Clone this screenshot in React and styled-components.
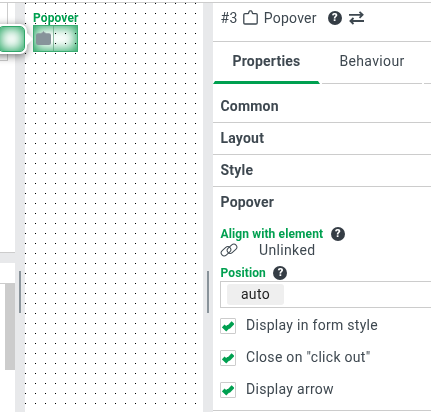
import React from "react";
import styled, { createGlobalStyle, css } from "styled-components";

const dots = css`
  background:
    linear-gradient(to bottom, transparent 1px, #fff 1px) ${(p) => p.$x || 0}px ${(p) => p.$y || 0}px / 10px 10px,
    linear-gradient(to right, #000 1px, #fff 1px) ${(p) => p.$x || 0}px ${(p) => p.$y || 0}px / 10px 10px;
`;

const Global = createGlobalStyle`
  * { box-sizing: border-box; }
  body { margin: 0; background: #fff; overflow: hidden; }
`;
const Screen = styled.div`
  width: 431px; height: 412px; padding-top: 2px; overflow: hidden; background: #fff;
  font-family: Roboto, sans-serif; font-size: 14px; letter-spacing: 0.35px; color: #3e4850;
`;
const Workspace = styled.div`
  display: grid; grid-template-columns: 15px 10px 178px 10px 218px;
  height: 410px; border-top: 1px solid #ccc;
`;
const TreePane = styled.div`
  display: flex; flex-direction: column; min-width: 0;
`;
const TreeTop = styled.div`
  height: 250px; border-bottom: 1px solid #ccc;
`;
const TreeCard = styled.div`
  width: 8px; height: 58px; border: solid #ccc; border-width: 0 1px 1px 0;
`;
const HSplit = styled.div`height: 10px; background: #e8e9eb;`;
const TreeHeader = styled.div`height: 20px;`;
const TreeList = styled.div`
  flex: 1; display: flex; justify-content: flex-end; border-top: 1px solid #ccc;
`;
const Thumb = styled.div`width: 10px; height: 87px; margin-top: -1px; background: #ccc;`;
const Gutter = styled.div`
  background: #e8e9eb; padding: 268px 0 0 4px;
`;
const Grip = styled.div`width: 2px; height: 42px; background: #89939a;`;
const Canvas = styled.div`
  position: relative;
  ${dots}
`;
const Bubble = styled.div`
  position: absolute; left: -35px; top: 21px; width: 37px; height: 30px;
  border: 2px solid #fff; border-radius: 7px; background: #fff;
  box-shadow: 0 2px 8px rgba(0, 0, 0, 0.55);
`;
const BubbleGlow = styled.div`
  height: 26px; margin-left: 6px; border-radius: 5px; border: 1px solid #2fa669;
  box-shadow: inset 0 0 12px 1px #18a058;
`;
const BubbleArrow = styled.svg`position: absolute; left: 33px; top: 5px;`;
const CanvasLabel = styled.div`
  position: absolute; left: 8px; top: 7px; font-size: 12px; line-height: 16px;
  font-weight: 700; letter-spacing: 0.12px; color: #00a050;
`;
const CanvasItem = styled.div`
  position: absolute; left: 8px; top: 22px; width: 45px; height: 27px;
  display: flex; border: 1px solid #3fae75; background: #fff;
  box-shadow: inset 0 0 12px 1px #18a058;
`;
const ItemIcon = styled.div`
  width: 20px; padding: 5px 0 0 2px;
  border-right: 1px solid rgba(80, 150, 110, 0.6);
  svg { display: block; }
`;
const ItemBody = styled.div`
  flex: 1; mix-blend-mode: multiply;
  ${dots}
`;
const Panel = styled.div`overflow: hidden;`;
const TitleBar = styled.div`
  height: 39px; padding: 0 0 9px 7.5px; display: flex; align-items: center;
  border-bottom: 1px solid #ccc;
`;
const TitleIcon = styled.svg`flex: none; margin: 0 6px 0 5px;`;
const TitleText = styled.span`width: 64px; letter-spacing: 0.25px;`;
const SwapIcon = styled.svg`flex: none; margin-left: 7px;`;
const Tabs = styled.div`display: flex; gap: 2px; height: 42px;`;
const Tab = styled.div`
  flex: none; width: ${(p) => p.$width}px; padding-top: 7px; line-height: 24px; text-align: center; height: 42px;
  font-weight: ${(p) => (p.$active ? 700 : 400)};
  letter-spacing: ${(p) => (p.$active ? 0.2 : 0.35)}px;
  background: linear-gradient(${(p) => (p.$active ? "#00a050, #00a050" : "#ccc, #ccc")}) bottom / 100% ${(p) => (p.$active ? 3 : 1)}px no-repeat;
  clip-path: ${(p) => (p.$active ? "polygon(0 0, 100% 0, calc(100% - 2px) calc(100% - 3px), 100% 100%, 0 100%, 2px calc(100% - 3px))" : "none")};
`;
const Section = styled.div`
  height: 32px; padding-left: 7.5px; line-height: 31px; font-weight: 700; letter-spacing: 0.2px;
  border-bottom: 1px solid ${(p) => (p.$open ? "transparent" : "#ccc")};
`;
const Sections = styled.div`padding-top: 7px;`;
const Fields = styled.div`padding: 7px 0 0 7px; height: 192px; border-bottom: 1px solid #ccc;`;
const FieldLabel = styled.div`
  display: flex; align-items: center; gap: 7.5px; height: 16px; padding-left: 0.5px;
  font-size: 12px; font-weight: 700; letter-spacing: 0.12px; color: #00a050;
`;
const LinkRow = styled.div`
  display: flex; align-items: center; gap: 21px; height: 16px; margin-bottom: 7px;
`;
const SelectBox = styled.div`
  width: 230px; height: 27px; margin: 0 0 2px; border: 1px solid #ccc; padding: 2px 6px;
`;
const Chip = styled.div`
  width: 57px; height: 21px; border-radius: 3px; background: #efefef; color: #222;
  line-height: 21px; text-align: center;
`;
const CheckRow = styled.div`
  display: flex; align-items: center; gap: 10px; height: 32px; letter-spacing: 0.29px;
`;
const CheckText = styled.span`padding-bottom: 2px;`;
const CheckBox = styled.div`
  width: 16px; height: 16px; display: grid; place-items: center;
  border: 1px solid #ccc; border-radius: 1px; background: #fff;
`;
const HelpDot = styled.span`
  flex: none; display: grid; place-items: center; width: 14px; height: 14px; border-radius: 50%;
  background: #353d45; color: #fff; font-size: 11px; line-height: 14px; font-weight: 900; letter-spacing: 0;
`;

const Help = () => <HelpDot>?</HelpDot>;

const Splitter = () => <Gutter><Grip /></Gutter>;

const Option = ({ children }) => (
  <CheckRow>
    <CheckBox>
      <svg width="12" height="12" viewBox="0 0 12 12">
        <path d="M1.2 6 4.2 8.8 6 6.9 7 6.9 11 2.6" fill="none" stroke="#00a050" strokeWidth="3.9" />
      </svg>
    </CheckBox>
    <CheckText>{children}</CheckText>
  </CheckRow>
);

export default function App() {
  return (
    <Screen>
      <Global />
      <Workspace>
        <TreePane>
          <TreeTop><TreeCard /></TreeTop>
          <HSplit />
          <TreeHeader />
          <TreeList><Thumb /></TreeList>
        </TreePane>
        <Splitter />
        <Canvas>
          <CanvasLabel>Popover</CanvasLabel>
          <CanvasItem>
            <ItemIcon>
              <svg width="15" height="14" viewBox="0 0 15 14">
                <path d="M2 2.3H5.5V1.6H6.5L7.5 0 8.5 1.6H9.5V2.3H13Q15 2.3 15 4.3V12Q15 14 13 14H2Q0 14 0 12V4.3Q0 2.3 2 2.3Z" fill="#87939a" />
              </svg>
            </ItemIcon>
            <ItemBody $x={1} $y={7} />
          </CanvasItem>
          <Bubble>
            <BubbleGlow />
            <BubbleArrow width="8" height="16" viewBox="0 0 8 16">
              <path d="M0 0 8 8 0 16Z" fill="#fff" />
            </BubbleArrow>
          </Bubble>
        </Canvas>
        <Splitter />
        <Panel>
          <TitleBar>
            #3
            <TitleIcon width="15" height="15" viewBox="0 0 15 15">
              <path d="M2 3.6H5.1Q5.5 3.6 5.7 2.8L6.2 1.4Q6.4.8 7 .8H8Q8.6.8 8.8 1.4L9.3 2.8Q9.5 3.6 9.9 3.6H13Q14.2 3.6 14.2 4.8V12.8Q14.2 14 13 14H2Q.8 14 .8 12.8V4.8Q.8 3.6 2 3.6Z" fill="none" stroke="#3e4850" strokeWidth="1.3" />
            </TitleIcon>
            <TitleText>Popover</TitleText>
            <Help />
            <SwapIcon width="15" height="14" viewBox="0 0 15 14">
              <path d="M0 3.8H13.5M10.5 .8 13.6 3.8 10.5 6.8M15 10H1.5M4.5 7 1.4 10 4.5 13" fill="none" stroke="#3e4850" strokeWidth="1.8" />
            </SwapIcon>
          </TitleBar>
          <Tabs>
            <Tab $width={107} $active>Properties</Tab>
            <Tab $width={100}>Behaviour</Tab>
            <Tab $width={100} />
          </Tabs>
          <Sections>
            <Section>Common</Section>
            <Section>Layout</Section>
            <Section>Style</Section>
            <Section $open>Popover</Section>
          </Sections>
          <Fields>
            <FieldLabel>Align with element <Help /></FieldLabel>
            <LinkRow>
              <svg width="18" height="14" viewBox="0 0 18 14">
                <g fill="none" stroke="#3e4850" strokeWidth="1">
                  <rect x="0.6" y="5.2" width="10.8" height="6" rx="3" transform="rotate(-42 6 8.2)" />
                  <rect x="6.6" y="2.8" width="10.8" height="6" rx="3" transform="rotate(-42 12 5.8)" />
                </g>
              </svg>
              Unlinked
            </LinkRow>
            <FieldLabel>Position <Help /></FieldLabel>
            <SelectBox><Chip>auto</Chip></SelectBox>
            <Option>Display in form style</Option>
            <Option>Close on "click out"</Option>
            <Option>Display arrow</Option>
          </Fields>
        </Panel>
      </Workspace>
    </Screen>
  );
}
